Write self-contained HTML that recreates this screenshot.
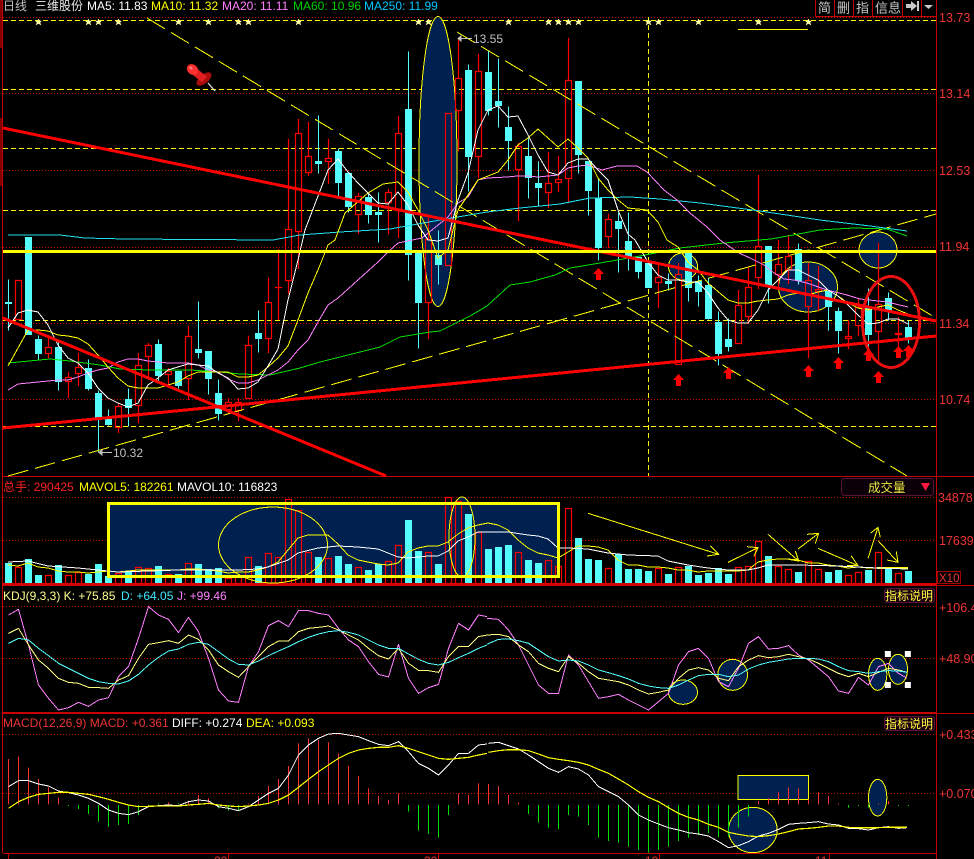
<!DOCTYPE html>
<html><head><meta charset="utf-8"><style>
html,body{margin:0;padding:0;background:#000;width:974px;height:859px;overflow:hidden}
svg{display:block}
text{font-family:"Liberation Sans","Noto Sans CJK SC",sans-serif;font-size:12px}
.ax{fill:#f03434;font-size:12.5px}
polyline,ellipse{shape-rendering:crispEdges}
</style></head><body>
<svg width="974" height="859" viewBox="0 0 974 859" xmlns="http://www.w3.org/2000/svg">
<rect width="974" height="859" fill="#000"/>
<rect x="0" y="0" width="2" height="48" fill="#800000"/>
<rect x="0" y="118" width="2" height="68" fill="#800000"/>
<g fill="none" shape-rendering="crispEdges">
<!-- dotted grid -->
<path stroke="#c00000" stroke-dasharray="1 2" d="M3 17.5H936M3 93.5H936M3 170.5H936M3 247.5H936M3 323.5H936M3 399.5H936M3 497.5H936M3 540.5H936M3 606.5H936M3 658.5H936M3 734.5H936M3 793.5H936"/>
<!-- dashed grid -->
<path stroke="#ffff00" stroke-dasharray="5 3" d="M3 20.5H936M3 89.5H936M3 148.5H936M3 210.5H936M3 320.5H936M3 426.5H936M648.5 17V476"/>
<!-- frame -->
<path stroke="#c80000" d="M936.5 0V859M2.5 0V853M3 476.5H936M3 585.5H974M3 712.5H936M3 713.5H974M3 853.5H936M8.5 853V859M228.5 853V859M438.5 853V859M659.5 853V859M829.5 853V859M936 476.5H974"/>
</g>
<!-- navy shapes main -->
<g fill="#002050" stroke="#ffff00">
<ellipse cx="438" cy="161.5" rx="19" ry="145"/>
<ellipse cx="878" cy="250" rx="19" ry="18"/>
<ellipse cx="683" cy="266.5" rx="14.5" ry="13.5"/>
<ellipse cx="808" cy="287" rx="29.5" ry="25"/>
</g>
<path d="M738 29.5H808" stroke="#ffff00" fill="none" shape-rendering="crispEdges"/>
<!-- candles -->
<g transform="translate(0 .5)">
<path fill="#54fcfc" transform="translate(0 -.5)" d="M5 302h7v2h-7zM25 237h7v98h-7zM35 339h7v15h-7zM55 347h7v35h-7zM85 368h7v21h-7zM95 393h7v27h-7zM105 419h7v6h-7zM125 399h7v9h-7zM155 344h7v32h-7zM175 371h7v15h-7zM195 349h7v4h-7zM205 351h7v28h-7zM215 393h7v21h-7zM255 333h7v6h-7zM315 161h7v3h-7zM335 151h7v32h-7zM345 173h7v34h-7zM365 197h7v18h-7zM375 212h7v3h-7zM405 109h7v146h-7zM415 250h7v53h-7zM435 255h7v10h-7zM465 70h7v87h-7zM485 72h7v39h-7zM495 101h7v5h-7zM505 127h7v14h-7zM525 156h7v22h-7zM535 183h7v5h-7zM575 81h7v74h-7zM585 161h7v30h-7zM595 198h7v50h-7zM615 221h7v8h-7zM625 241h7v16h-7zM635 257h7v15h-7zM645 263h7v25h-7zM665 281h7v3h-7zM685 250h7v38h-7zM695 281h7v11h-7zM705 285h7v34h-7zM715 322h7v32h-7zM725 339h7v8h-7zM765 246h7v41h-7zM795 249h7v32h-7zM825 291h7v16h-7zM835 311h7v20h-7zM865 307h7v28h-7zM885 298h7v13h-7zM905 327h7v13h-7z"/>
<path stroke="#54fcfc" fill="none" d="M8.5 279V330M38.5 335V359M58.5 340V390M88.5 359V390M98.5 390V452M108.5 409V425M128.5 388V426M158.5 339V380M178.5 371V388M198.5 301V358M208.5 351V394M218.5 379V420M258.5 310V352M318.5 115V173M338.5 148V198M348.5 173V212M368.5 192V223M378.5 192V242M408.5 51V280M418.5 250V348M438.5 230V284M468.5 64V191M488.5 50V115M498.5 58V127M508.5 106V170M528.5 138V198M538.5 161V205M578.5 81V173M588.5 161V215M598.5 178V260M618.5 212V272M628.5 212V270M638.5 257V278M668.5 273V290M688.5 250V301M698.5 275V306M708.5 277V319M718.5 311V365M728.5 318V351M768.5 246V303M798.5 243V284M828.5 291V330M838.5 307V353M868.5 288V355M888.5 292V320M908.5 320V343"/>
<path stroke="#ff0000" stroke-width="1.2" stroke-linecap="square" fill="none" d="M15.5 280h6V319h-6zM48.5 337V347M45.5 347h6V353h-6zM48.5 353V357M68.5 372V377M65.5 377h6V381h-6zM68.5 381V397M78.5 353V367M75.5 367h6V373h-6zM78.5 373V385M118.5 403V406M115.5 406h6V427h-6zM118.5 427V432M138.5 353V365M135.5 365h6V405h-6zM138.5 405V422M148.5 343V345M145.5 345h6V356h-6zM148.5 356V377M168.5 368V371M165.5 371h6V374h-6zM168.5 374V385M188.5 326V336M185.5 336h6V378h-6zM188.5 378V399M228.5 398V402M225.5 402h6V409h-6zM228.5 409V413M238.5 398V402M235.5 402h6V410h-6zM238.5 410V420M248.5 336V345M245.5 345h6V398h-6zM268.5 278V302M265.5 302h6V338h-6zM268.5 338V352M278.5 249V319M275.5 287h6M288.5 139V229M285.5 229h6V280h-6zM288.5 280V293M298.5 119V133M295.5 133h6V231h-6zM298.5 231V268M308.5 122V156M305.5 156h6V172h-6zM308.5 172V175M328.5 139V158M325.5 158h6V161h-6zM328.5 161V183M358.5 193V196M355.5 196h6V214h-6zM358.5 214V233M388.5 189V192M385.5 192h6V202h-6zM388.5 202V233M398.5 116V133M395.5 133h6V210h-6zM398.5 210V237M428.5 218V239M425.5 239h6V302h-6zM428.5 302V338M445.5 113h6V265h-6zM458.5 38V78M455.5 78h6V110h-6zM458.5 110V150M478.5 54V71M475.5 71h6V156h-6zM478.5 156V177M518.5 143V146M515.5 146h6V169h-6zM518.5 169V220M548.5 152V183M545.5 183h6V192h-6zM548.5 192V207M558.5 156V179M555.5 179h6V182h-6zM558.5 182V191M568.5 38V80M565.5 80h6V178h-6zM568.5 178V202M608.5 214V219M605.5 219h6V236h-6zM608.5 236V247M658.5 263V277M655.5 277h6V282h-6zM658.5 282V307M678.5 263V274M675.5 274h6V364h-6zM738.5 290V305M735.5 305h6V343h-6zM748.5 267V287M745.5 287h6V316h-6zM748.5 316V323M758.5 175V246M755.5 246h6V277h-6zM758.5 277V288M778.5 240V264M775.5 264h6V274h-6zM778.5 274V287M788.5 235V256M785.5 256h6V269h-6zM788.5 269V283M808.5 263V280M805.5 280h6V306h-6zM808.5 306V357M818.5 266V289M815.5 289h6V291h-6zM818.5 291V310M848.5 320V336M845.5 336h6V338h-6zM848.5 338V348M858.5 298V307M855.5 307h6V325h-6zM858.5 325V335M878.5 243V304M875.5 304h6V331h-6zM878.5 331V362M898.5 317V333M895.5 333h6V334h-6zM898.5 334V347"/>
</g>
<!-- dashed trend lines -->
<g fill="none" stroke="#ffff00" shape-rendering="crispEdges">
<path stroke-dasharray="21 7" d="M147 18L907 476"/>
<path stroke-dasharray="21 7" d="M457 32L936 318"/>
<path stroke-dasharray="21 7" d="M8 476L936 214"/>
</g>
<!-- MA lines -->
<g fill="none" stroke-linejoin="round">
<polyline stroke="#20e0f0" points="8,235 60,235 85,238 125,239 273,240 300,235 340,232 390,229 440,220 487,212 520,208 560,204 590,198 630,197 660,199 700,203 760,211 820,220 870,226 907,231"/>
<polyline stroke="#00e000" points="8,363 50,359 70,361 100,365 120,369 150,370 190,370 220,372 240,374 270,375 300,368 320,362 340,357 380,347 400,337 430,332 440,331 470,316 487,306 510,285 530,282 555,275 570,268 600,263 640,256 680,248 724,243 771,239 820,230 854,228 887,229 907,236"/>
<polyline stroke="#ff80ff" points="8,390 18,384 28,383 38,382 48,381 58,380 68,380 78,377 88,373 98,370 108,368 118,362 128,359 138,359 148,361 158,362 168,363 178,363 188,363 198,365 208,370 218,372 228,379 238,383 248,383 258,380 268,375 278,370 288,362 298,350 308,340 318,322 328,305 338,298 358,280 378,262 388,252 398,243 422,238 448,217 458,203 468,197 478,180 487,178 507,177 517,176 528,176 538,177 548,176 558,175 568,168 578,166 588,165 602,170 617,166 637,166 647,172 664,190 677,200 690,213 707,227 720,240 739,253 750,258 764,265 774,273 784,279 794,280 807,283 827,290 847,295 860,299 887,302 908,307"/>
<polyline stroke="#ffff00" points="8,366 18,348 28,330 38,330 48,331 58,335 68,336 78,338 88,344 98,355 108,367 118,378 128,386 138,388 148,388 158,388 168,385 178,382 188,376 198,372 208,372 218,372 228,372 238,377 248,377 258,375 268,367 278,358 288,346 298,320 308,293 318,270 328,245 335,240 345,213 368,193 383,184 398,182 408,192 418,210 428,230 438,258 448,250 458,210 468,195 478,180 488,176 498,172 508,160 518,145 528,138 538,129 548,138 558,147 568,139 578,148 588,158 598,178 608,190 618,200 628,208 647,210 658,222 667,240 678,247 688,262 698,270 708,283 728,300 738,303 748,303 758,301 768,300 778,299 788,295 798,293 808,295 818,292 828,290 838,296 848,303 858,308 868,310 878,307 888,305 898,310 908,314"/>
<polyline stroke="#ffffff" points="8,328 18,313 28,310 38,312 48,325 58,345 68,358 78,363 88,373 98,388 108,398 118,403 128,407 138,403 148,385 158,378 168,370 178,367 188,364 198,365 208,366 218,373 228,378 238,389 248,388 258,382 268,366 278,349 288,300 298,260 305,230 328,170 338,159 348,172 358,183 368,193 378,203 388,204 398,192 408,205 418,225 428,240 438,241 448,238 458,200 468,173 478,130 488,110 498,106 508,117 518,116 528,135 538,155 548,172 558,175 568,163 578,159 588,159 598,170 608,180 618,210 628,234 635,240 648,262 658,275 668,280 678,280 688,282 698,282 708,293 718,308 728,320 738,323 748,323 758,310 768,290 778,280 788,270 798,270 808,275 818,280 828,290 838,296 848,305 858,315 868,324 878,323 888,319 898,319 908,324"/>
</g>
<!-- thick lines -->
<path d="M3 128L936 321M3 428L936 336M3 318L386 476" stroke="#ff0000" stroke-width="3" fill="none" shape-rendering="crispEdges"/>
<rect x="3" y="250" width="933" height="3" fill="#ffff00"/>
<ellipse cx="891" cy="322" rx="28.5" ry="45.5" fill="none" stroke="#e81010" stroke-width="3"/>
<!-- red arrows -->
<path fill="#ff0000" d="M598.5 268l5.5 6h-3v6h-5v-6h-3zM678.5 374l5.5 6h-3v6h-5v-6h-3zM728.5 367l5.5 6h-3v6h-5v-6h-3zM808.5 365l5.5 6h-3v6h-5v-6h-3zM838.5 357l5.5 6h-3v6h-5v-6h-3zM868.5 349l5.5 6h-3v6h-5v-6h-3zM878.5 371l5.5 6h-3v6h-5v-6h-3zM898.5 346l5.5 6h-3v6h-5v-6h-3zM908.5 345l5.5 6h-3v6h-5v-6h-3z"/>
<!-- stars -->
<path fill="#ffffa8" stroke="#ffffa8" stroke-width=".4" d="M38.5 19l1 2h2l-1.5 1.5 1 2.5-2.5-1.5-2.5 1.5 1-2.5-1.5-1.5h2zM88.5 19l1 2h2l-1.5 1.5 1 2.5-2.5-1.5-2.5 1.5 1-2.5-1.5-1.5h2zM98.5 19l1 2h2l-1.5 1.5 1 2.5-2.5-1.5-2.5 1.5 1-2.5-1.5-1.5h2zM118.5 19l1 2h2l-1.5 1.5 1 2.5-2.5-1.5-2.5 1.5 1-2.5-1.5-1.5h2zM178.5 19l1 2h2l-1.5 1.5 1 2.5-2.5-1.5-2.5 1.5 1-2.5-1.5-1.5h2zM208.5 19l1 2h2l-1.5 1.5 1 2.5-2.5-1.5-2.5 1.5 1-2.5-1.5-1.5h2zM238.5 19l1 2h2l-1.5 1.5 1 2.5-2.5-1.5-2.5 1.5 1-2.5-1.5-1.5h2zM248.5 19l1 2h2l-1.5 1.5 1 2.5-2.5-1.5-2.5 1.5 1-2.5-1.5-1.5h2zM298.5 19l1 2h2l-1.5 1.5 1 2.5-2.5-1.5-2.5 1.5 1-2.5-1.5-1.5h2zM418.5 19l1 2h2l-1.5 1.5 1 2.5-2.5-1.5-2.5 1.5 1-2.5-1.5-1.5h2zM428.5 19l1 2h2l-1.5 1.5 1 2.5-2.5-1.5-2.5 1.5 1-2.5-1.5-1.5h2zM508.5 19l1 2h2l-1.5 1.5 1 2.5-2.5-1.5-2.5 1.5 1-2.5-1.5-1.5h2zM548.5 19l1 2h2l-1.5 1.5 1 2.5-2.5-1.5-2.5 1.5 1-2.5-1.5-1.5h2zM558.5 19l1 2h2l-1.5 1.5 1 2.5-2.5-1.5-2.5 1.5 1-2.5-1.5-1.5h2zM568.5 19l1 2h2l-1.5 1.5 1 2.5-2.5-1.5-2.5 1.5 1-2.5-1.5-1.5h2zM578.5 19l1 2h2l-1.5 1.5 1 2.5-2.5-1.5-2.5 1.5 1-2.5-1.5-1.5h2zM648.5 19l1 2h2l-1.5 1.5 1 2.5-2.5-1.5-2.5 1.5 1-2.5-1.5-1.5h2zM658.5 19l1 2h2l-1.5 1.5 1 2.5-2.5-1.5-2.5 1.5 1-2.5-1.5-1.5h2zM698.5 19l1 2h2l-1.5 1.5 1 2.5-2.5-1.5-2.5 1.5 1-2.5-1.5-1.5h2zM758.5 19l1 2h2l-1.5 1.5 1 2.5-2.5-1.5-2.5 1.5 1-2.5-1.5-1.5h2zM808.5 19l1 2h2l-1.5 1.5 1 2.5-2.5-1.5-2.5 1.5 1-2.5-1.5-1.5h2z"/>
<!-- pushpin -->
<path d="M208 83L215 91" stroke="#e0e0e0" stroke-width="1.3"/>
<ellipse cx="204" cy="79" rx="9" ry="4.5" transform="rotate(-40 204 79)" fill="#a80c0c" style="shape-rendering:auto"/>
<path d="M194.4 66.6L206.9 76.6 202.1 82.4 189.6 72.4z" fill="#e02020"/>
<ellipse cx="192.5" cy="69.5" rx="6" ry="5" transform="rotate(40 192.5 69.5)" fill="#ff3030" style="shape-rendering:auto"/>
<ellipse cx="191" cy="68" rx="2" ry="1.2" transform="rotate(40 191 68)" fill="#ff8080" style="shape-rendering:auto"/>
<!-- price marks -->
<path d="M458 38.5H472M461 36l-3 2.5 3 2.5zM99 452.5H112M102 450l-3 2.5 3 2.5z" stroke="#c0c0c0" fill="#c0c0c0"/>
<text x="473" y="43" fill="#c0c0c0">13.55</text>
<text x="113" y="457" fill="#c0c0c0">10.32</text>
<!-- header -->
<text x="3" y="10" fill="#c0c0c0">日线</text>
<text x="35" y="10" fill="#e8e8e8">三维股份</text>
<text x="87" y="10" fill="#fff">MA5: 11.83</text>
<text x="151" y="10" fill="#ffff00">MA10: 11.32</text>
<text x="222" y="10" fill="#ff80ff">MA20: 11.11</text>
<text x="293" y="10" fill="#00d000">MA60: 10.96</text>
<text x="364" y="10" fill="#00c8ff">MA250: 11.99</text>
<!-- top-right buttons -->
<g shape-rendering="crispEdges" fill="none" stroke="#c80000"><path d="M815.5 0V16.5H936M834.5 0V16M853.5 0V16M872.5 0V16M902.5 0V16M921.5 0V16"/></g>
<g fill="#c8c8c8">
<text x="818" y="12.5" style="font-size:13px">简</text>
<text x="837" y="12.5" style="font-size:13px">删</text>
<text x="856" y="12.5" style="font-size:13px">指</text>
<text x="875" y="12.5" style="font-size:13px">信息</text>
<path d="M906 4h5V1l6 5-6 5V8h-5zM917 1h2v10h-2zM924 5h9l-4.5 4z"/>
</g>
<!-- axis labels -->
<text class="ax" x="939" y="22">13.73</text>
<text class="ax" x="939" y="98">13.14</text>
<text class="ax" x="939" y="175">12.53</text>
<text class="ax" x="939" y="251">11.94</text>
<text class="ax" x="939" y="328">11.34</text>
<text class="ax" x="939" y="404">10.74</text>
<text class="ax" x="938" y="502">34878</text>
<text class="ax" x="939" y="545">17639</text>
<text class="ax" x="939" y="612">+106.4</text>
<text class="ax" x="939" y="663">+48.90</text>
<text class="ax" x="939" y="739">+0.433</text>
<text class="ax" x="939" y="798">+0.070</text>
<!-- Volume -->
<text x="3" y="491" fill="#ff2020">总手: 290425</text>
<text x="79" y="491" fill="#ffff00">MAVOL5: 182261</text>
<text x="177" y="491" fill="#fff">MAVOL10: 116823</text>
<rect x="841.5" y="478.5" width="92" height="17" rx="3" fill="#0c0008" stroke="#5a1038"/>
<text x="868" y="492" fill="#e8e840" style="font-size:12.5px">成交量</text>
<path d="M921 483h9l-4.5 8z" fill="#ff1840"/>
<rect x="108" y="503" width="450" height="74" fill="#002050"/>
<ellipse cx="462" cy="537" rx="13" ry="40" fill="#002050"/>
<g transform="translate(0 .5)">
<path fill="#54fcfc" transform="translate(0 -.5)" d="M5 563h7v20h-7zM25 559h7v24h-7zM35 575h7v8h-7zM55 565h7v18h-7zM85 574h7v9h-7zM95 564h7v19h-7zM105 576h7v7h-7zM125 572h7v11h-7zM155 566h7v17h-7zM175 574h7v9h-7zM195 564h7v19h-7zM205 569h7v14h-7zM215 568h7v15h-7zM255 566h7v17h-7zM315 557h7v26h-7zM335 556h7v27h-7zM345 564h7v19h-7zM365 570h7v13h-7zM375 564h7v19h-7zM405 520h7v63h-7zM415 551h7v32h-7zM435 564h7v19h-7zM465 514h7v69h-7zM485 549h7v34h-7zM495 547h7v36h-7zM505 545h7v38h-7zM525 560h7v23h-7zM535 563h7v20h-7zM575 538h7v45h-7zM585 559h7v24h-7zM595 560h7v23h-7zM615 554h7v29h-7zM625 569h7v14h-7zM635 569h7v14h-7zM645 571h7v12h-7zM665 574h7v9h-7zM685 566h7v17h-7zM695 575h7v8h-7zM705 573h7v10h-7zM715 568h7v15h-7zM725 574h7v9h-7zM765 556h7v27h-7zM795 572h7v11h-7zM825 572h7v11h-7zM835 570h7v13h-7zM865 570h7v13h-7zM885 569h7v14h-7zM905 571h7v12h-7z"/>
<path stroke="#ff0000" stroke-width="1.2" fill="none" d="M15.5 567h6V583h-6zM45.5 575h6V583h-6zM65.5 575h6V583h-6zM75.5 572h6V583h-6zM115.5 573h6V583h-6zM135.5 567h6V583h-6zM145.5 568h6V583h-6zM165.5 574h6V583h-6zM185.5 563h6V583h-6zM225.5 578h6V583h-6zM235.5 575h6V583h-6zM245.5 557h6V583h-6zM265.5 553h6V583h-6zM275.5 557h6V583h-6zM285.5 499h6V583h-6zM295.5 510h6V583h-6zM305.5 552h6V583h-6zM325.5 558h6V583h-6zM355.5 567h6V583h-6zM385.5 561h6V583h-6zM395.5 545h6V583h-6zM425.5 552h6V583h-6zM445.5 497h6V583h-6zM455.5 501h6V583h-6zM475.5 532h6V583h-6zM515.5 552h6V583h-6zM545.5 560h6V583h-6zM555.5 566h6V583h-6zM565.5 508h6V583h-6zM605.5 568h6V583h-6zM655.5 568h6V583h-6zM675.5 567h6V583h-6zM735.5 567h6V583h-6zM745.5 566h6V583h-6zM755.5 541h6V583h-6zM775.5 566h6V583h-6zM785.5 569h6V583h-6zM805.5 561h6V583h-6zM815.5 569h6V583h-6zM845.5 575h6V583h-6zM855.5 572h6V583h-6zM875.5 552h6V583h-6zM895.5 573h6V583h-6z"/>
</g>
<rect x="3" y="583" width="933" height="2" fill="#d80000"/>
<g fill="none" stroke="#ffff00">
<ellipse cx="273" cy="545" rx="54.5" ry="38"/>
<ellipse cx="462" cy="537" rx="13" ry="40"/>
<polyline points="8,565 18,566 28,563 38,567 48,568 58,571 68,572 78,572 88,573 98,572 108,571 118,572 128,571 138,570 148,570 158,570 168,570 178,570 188,569 198,569 208,570 218,571 228,573 238,572 248,572 258,570 268,567 278,562 288,550 298,538 308,535 318,535 328,535 338,544 348,555 358,560 368,562 378,564 388,565 398,563 408,552 418,548 428,546 438,546 448,542 458,534 468,528 478,525 488,523 498,525 508,530 518,540 528,548 538,553 548,555 558,558 568,552 578,546 588,546 598,547 608,550 618,560 628,565 638,565 648,567 658,567 668,568 678,570 688,570 698,572 708,571 718,571 728,571 738,571 748,570 758,562 768,560 778,559 788,559 798,560 808,563 818,563 828,565 838,566 848,568 858,567 868,568 878,568 888,568 898,568 908,568"/>
<path stroke-width="2" d="M877 568H908"/>
</g>
<polyline fill="none" stroke="#fff" points="8,562 28,561 48,566 78,568 98,570 118,572 148,571 178,570 208,570 238,570 258,569 268,567 288,560 298,553 318,548 338,546 358,547 378,549 398,557 408,558 428,556 438,556 448,551 458,541 468,537 478,532 488,532 508,532 528,535 538,536 548,539 558,548 568,548 588,549 608,553 628,555 658,556 668,561 688,565 708,568 728,570 748,570 758,568 768,565 798,565 838,566 858,567 878,568 908,569"/>
<!-- yellow frame drawn over the bars -->
<rect x="108.5" y="503.5" width="450" height="73" fill="none" stroke="#ffff00" stroke-width="3" shape-rendering="crispEdges"/>
<!-- yellow annotation arrows -->
<g transform="translate(487 475) scale(.33333)" fill="none" stroke="#ffff00" stroke-width="3" shape-rendering="crispEdges">
<path d="M303 115L695 238M670 213L695 238L660 243"/>
<path d="M723 262L813 218M780 215L813 218L800 245"/>
<path d="M843 178L935 258M925 228L935 258L905 253"/>
<path d="M933 222L995 175M960 178L995 175L985 205"/>
<path d="M993 220L1113 272M1093 243L1113 272L1080 272"/>
<path d="M1143 250L1173 157M1150 175L1173 157L1180 187"/>
<path d="M1173 197L1233 262M1228 230L1233 262L1200 255"/>
</g>
<rect x="937.5" y="571.5" width="23" height="12" fill="none" stroke="#a00000" shape-rendering="crispEdges"/>
<text x="939" y="582" fill="#f03434" style="font-size:11.5px">X10</text>
<!-- KDJ -->
<text x="3" y="600" fill="#ffff90">KDJ(9,3,3) K: +75.85</text>
<text x="121" y="600" fill="#40e8ff">D: +64.05</text>
<text x="177" y="600" fill="#ff80ff">J: +99.46</text>
<rect x="884.5" y="588.5" width="50" height="14" rx="3" fill="#1a0010" stroke="#5a1038"/>
<text x="885" y="600" fill="#ffff40">指标说明</text>
<g transform="translate(.167 585) scale(.33333)" fill="none" stroke-width="3" stroke-linejoin="round">
<polyline stroke="#ff80ff" points="25,90 55,73 85,180 115,300 145,340 175,375 205,368 235,352 265,364 295,345 325,338 355,275 385,245 415,160 445,65 475,90 505,103 535,143 565,97 595,140 625,220 655,315 685,348 715,352 745,245 775,200 805,122 835,107 865,125 895,77 925,77 955,85 985,90 1015,130 1045,165 1075,185 1105,230 1135,268 1165,276 1195,178 1225,280 1255,325 1285,308 1315,298 1345,190 1375,115 1405,135 1435,90 1461,95"/>
<polyline stroke="#ffff80" points="25,145 55,130 85,180 115,225 145,250 175,280 205,292 235,295 265,307 295,308 325,310 355,285 385,272 415,220 445,178 475,173 505,167 535,175 565,150 595,163 625,195 655,240 685,260 715,277 745,245 775,215 805,185 835,168 865,168 895,140 925,130 955,127 985,123 1015,135 1045,150 1075,165 1105,190 1135,212 1165,222 1195,190 1225,235 1255,256 1285,257 1315,262 1345,215 1375,185 1405,185 1435,155 1461,150"/>
<polyline stroke="#54fcfc" points="25,175 55,160 85,165 115,190 145,212 175,235 205,250 235,265 265,280 295,290 325,295 355,297 385,288 415,268 445,240 475,217 505,198 535,192 565,178 595,172 625,178 655,200 685,222 715,238 745,240 775,228 805,212 835,198 865,185 895,170 925,157 955,147 985,140 1015,137 1045,142 1075,150 1105,165 1135,180 1165,190 1195,190 1225,207 1255,223 1285,235 1315,240 1345,232 1375,218 1405,205 1435,190 1461,180"/>
</g>
<g transform="translate(486.833 585) scale(.33333)" stroke-width="3" stroke-linejoin="round">
<g fill="#002050" stroke="#ffff00">
<ellipse cx="588.5" cy="321.5" rx="43.5" ry="36.5"/>
<ellipse cx="737.5" cy="269.5" rx="44.5" ry="46.5"/>
<ellipse cx="1172.5" cy="268" rx="27.5" ry="48"/>
<ellipse cx="1233.5" cy="253" rx="28.5" ry="45"/>
</g>
<g fill="none">
<polyline stroke="#ff80ff" points="0,100 35,103 65,135 95,180 125,240 155,300 185,325 215,325 245,210 275,240 305,290 335,340 365,335 395,328 425,345 455,360 485,375 515,350 545,325 575,240 605,200 635,190 665,220 695,290 725,305 755,250 785,175 815,155 845,192 875,190 905,182 935,210 965,225 995,250 1025,275 1055,318 1085,325 1115,277 1145,300 1175,245 1205,235 1235,265 1261,280"/>
<polyline stroke="#ffff80" points="0,150 35,148 65,155 95,180 125,200 155,235 185,250 215,260 245,215 275,235 305,260 335,280 365,285 395,290 425,300 455,315 485,327 515,322 545,315 575,280 605,255 635,248 665,255 695,280 725,287 755,245 785,225 815,212 845,218 875,215 905,208 935,215 965,222 995,235 1025,250 1055,265 1085,275 1115,265 1145,275 1175,262 1205,250 1235,255 1261,262"/>
<polyline stroke="#54fcfc" points="0,178 35,163 65,162 95,167 125,175 155,195 185,215 215,228 245,225 275,228 305,240 335,255 365,263 395,272 425,282 455,295 485,303 515,308 545,310 575,300 605,285 635,272 665,268 695,268 725,275 755,270 785,252 815,240 845,232 875,227 905,222 935,220 965,220 995,222 1025,230 1055,245 1085,257 1115,260 1145,265 1175,260 1205,257 1235,258 1261,262"/>
</g>
<path fill="#fff" d="M1194 198h18v18h-18zM1254 198h18v18h-18zM1194 291h18v18h-18zM1254 291h18v18h-18z"/>
</g>
<!-- MACD -->
<text x="3" y="727" fill="#f03434">MACD(12,26,9) MACD: +0.361</text>
<text x="172" y="727" fill="#fff">DIFF: +0.274</text>
<text x="246" y="727" fill="#ffff00">DEA: +0.093</text>
<rect x="884.5" y="716.5" width="50" height="14" rx="3" fill="#1a0010" stroke="#5a1038"/>
<text x="885" y="728" fill="#ffff40">指标说明</text>
<g transform="translate(486.833 710) scale(.33333)">
<rect x="754" y="196" width="211" height="72" fill="#002050" stroke="#ffff00" stroke-width="3" shape-rendering="crispEdges"/>
<ellipse cx="798" cy="360" rx="73" ry="68" fill="#002050" stroke="#ffff00" stroke-width="3"/>
<ellipse cx="1172.5" cy="263" rx="27.5" ry="55" fill="#002050" stroke="#ffff00" stroke-width="3"/>
</g>
<g transform="translate(.167 710) scale(.33333)" fill="none" stroke-width="3">
<path stroke="#ff3030" d="M25 283V147M55 283V140M85 283V173M115 283V207M145 283V232M175 283V263M505 283V277M565 283V272M595 283V255M625 283V265M745 283V280M775 283V258M805 283V228M835 283V207M865 283V168M895 283V100M925 283V85M955 283V90M985 283V97M1015 283V130M1045 283V168M1075 283V198M1105 283V235M1135 283V258M1165 283V270M1195 283V250M1375 283V250M1405 283V255M1435 283V220"/>
<path stroke="#00e000" d="M205 285V288M235 285V297M265 285V312M295 285V335M325 285V350M355 285V345M385 285V342M415 285V315M445 285V288M475 280V283M535 280V283M655 285V295M685 285V302M715 285V300M1225 285V305M1255 285V362M1285 285V372M1315 285V383M1345 285V315"/>
</g>
<g transform="translate(486.833 710) scale(.33333)" fill="none" stroke-width="3">
<path stroke="#ff3030" d="M5 283V222M35 283V228M65 283V255M95 283V277M815 283V273M845 283V265M875 283V247M905 283V232M935 283V235M965 283V268M995 283V247M1025 283V258M1055 283V280M1175 283V280M1205 283V273"/>
<path stroke="#00e000" d="M125 285V312M155 285V338M185 285V353M215 285V358M245 285V315M275 285V320M305 285V345M335 285V383M365 285V393M395 285V398M425 285V410M455 285V420M485 285V428M515 285V420M545 285V410M575 285V393M605 285V383M635 285V375M665 285V370M695 285V382M725 285V380M755 285V353M785 285V320M1085 285V293M1115 285V288M1145 285V292M1235 285V288M1265 285V288"/>
</g>
<g transform="translate(.167 710) scale(.33333)" fill="none" stroke-width="3" stroke-linejoin="round">
<polyline stroke="#fff" points="25,230 55,212 85,212 115,222 145,228 175,243 205,248 235,255 265,265 295,280 325,300 355,310 385,314 415,305 445,290 475,287 505,285 535,287 565,275 595,270 625,273 655,290 685,295 715,302 745,290 775,270 805,250 835,235 865,195 895,135 925,105 955,85 985,72 1015,70 1045,75 1075,80 1105,92 1135,103 1165,107 1195,95 1225,125 1255,160 1285,175 1315,195 1345,165 1375,130 1405,130 1435,105 1461,102"/>
<polyline stroke="#ffff00" stroke-width="3.6" points="25,295 55,275 85,262 115,253 145,250 175,247 205,247 235,250 265,253 295,260 325,268 355,277 385,285 415,290 445,289 475,288 505,288 535,288 565,285 595,283 625,280 655,285 685,288 715,290 745,288 775,285 805,280 835,270 865,255 895,232 925,208 955,185 985,165 1015,145 1045,130 1075,120 1105,115 1135,112 1165,112 1195,107 1225,115 1255,125 1285,135 1315,145 1345,148 1375,145 1405,142 1435,135 1461,130"/>
</g>
<g transform="translate(486.833 710) scale(.33333)" fill="none" stroke-width="3" stroke-linejoin="round">
<polyline stroke="#fff" points="5,100 35,97 65,107 95,117 125,135 155,155 185,175 215,187 245,170 275,177 305,195 335,230 365,245 395,260 425,285 455,315 485,330 515,342 545,353 575,360 605,368 635,372 665,378 695,395 725,413 755,407 785,395 815,378 845,370 875,358 905,343 935,340 965,338 995,335 1025,342 1055,345 1085,355 1115,356 1145,360 1175,353 1205,350 1235,355 1261,353"/>
<polyline stroke="#ffff00" stroke-width="3.6" points="5,127 35,122 65,119 95,119 125,122 155,132 185,143 215,148 245,152 275,157 305,165 335,178 365,190 395,207 425,225 455,245 485,262 515,275 545,293 575,310 605,322 635,330 665,343 695,352 725,367 755,373 785,378 815,380 845,377 875,372 905,365 935,357 965,355 995,352 1025,348 1055,348 1085,352 1115,353 1145,353 1175,353 1205,352 1235,352 1261,352"/>
</g>
<!-- axis dates, clipped at the bottom edge -->
<text x="214" y="865" fill="#f03434">20</text>
<text x="424" y="865" fill="#f03434">30</text>
<text x="645" y="865" fill="#f03434">10</text>
<text x="815" y="865" fill="#f03434">11</text>
</svg>
</body></html>
